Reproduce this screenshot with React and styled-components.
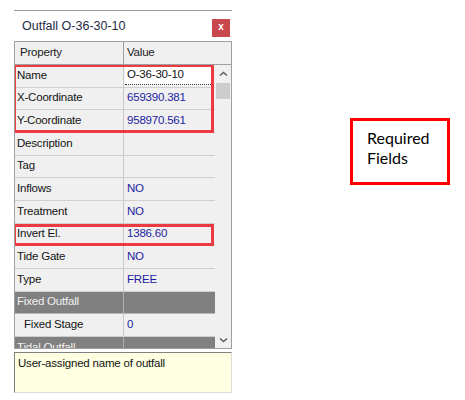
import styled, { createGlobalStyle } from 'styled-components';

const GlobalStyle = createGlobalStyle`
  body {
    margin: 0;
    background: #ffffff;
  }
`;

const Page = styled.div`
  display: flex;
  align-items: flex-start;
  padding: 10px 0 0 14px;
  font-family: "Liberation Sans", Arial, sans-serif;
`;

const Panel = styled.div`
  width: 218px;
  display: flex;
  flex-direction: column;
  border-top: 1px solid #9a9a9a;
`;

const TitleBar = styled.div`
  height: 30px;
  display: flex;
  align-items: center;
  justify-content: space-between;
  padding: 0 2px 0 8px;
`;

const Title = styled.span`
  font-size: 12.5px;
  color: #1f2a44;
  padding-bottom: 1px;
`;

const CloseButton = styled.button`
  width: 18px;
  height: 18px;
  margin-top: 4px;
  padding: 0 0 2px;
  border: none;
  background: #c8484d;
  color: #ffffff;
  font-family: "Liberation Sans", Arial, sans-serif;
  font-size: 10px;
  font-weight: bold;
  line-height: 1;
  cursor: pointer;
`;

const Grid = styled.div`
  height: 308px;
  box-sizing: border-box;
  border: 1px solid #a0a0a0;
  background: #f0f0f0;
  display: flex;
  flex-direction: column;
  overflow: hidden;
  font-size: 11.5px;
  letter-spacing: -0.2px;
`;

const Header = styled.div`
  display: flex;
  height: 23px;
  box-sizing: border-box;
  border-bottom: 1px solid #a0a0a0;
  flex-shrink: 0;
`;

const HeaderCell = styled.div`
  display: flex;
  align-items: center;
  box-sizing: border-box;
  color: #1a1a1a;
  padding-left: ${(p) => p.$pad}px;
  padding-bottom: 2px;
  ${(p) => (p.$width ? `width: ${p.$width}px; border-right: 1px solid #a0a0a0;` : 'flex: 1;')}
`;

const Body = styled.div`
  flex: 1;
  display: flex;
  min-height: 0;
`;

const Rows = styled.div`
  width: 200px;
  overflow: hidden;
`;

const Highlight = styled.div`
  position: relative;
  &::after {
    content: '';
    position: absolute;
    top: ${(p) => p.$top}px;
    bottom: 0;
    left: -2px;
    right: 1px;
    border: 3px solid #ec3a43;
    pointer-events: none;
  }
`;

const Row = styled.div`
  display: flex;
  height: 22.667px;
  box-sizing: border-box;
  border-bottom: 1px solid ${(p) => (p.$group ? '#b8b8b8' : '#cfcfcf')};
  background: ${(p) => (p.$group ? '#808080' : '#f0f0f0')};
`;

const Label = styled.div`
  width: 109px;
  box-sizing: border-box;
  display: flex;
  align-items: center;
  padding: 0 0 2px ${(p) => (p.$indent ? 9 : 2)}px;
  border-right: 1px solid ${(p) => (p.$group ? '#b0b0b0' : '#c8c8c8')};
  color: ${(p) => (p.$group ? '#f2f2f2' : '#141414')};
  white-space: nowrap;
`;

const Value = styled.div`
  flex: 1;
  display: flex;
  align-items: center;
  padding: 0 0 2px 3px;
  color: #1c1ca0;
  white-space: nowrap;
`;

const Editor = styled.div`
  align-self: stretch;
  flex: 1;
  display: flex;
  align-items: center;
  margin: 0 4px 0 -2px;
  padding: 0 0 1px 2px;
  background: #ffffff;
  border-bottom: 1px dotted #333333;
  color: #111111;
`;

const ScrollBar = styled.div`
  width: 16px;
  display: flex;
  flex-direction: column;
  background: #f0f0f0;
`;

const ArrowButton = styled.div`
  height: 17px;
  display: flex;
  align-items: center;
  justify-content: center;
  flex-shrink: 0;
`;

const Thumb = styled.div`
  height: 16px;
  margin: 1px 1px 0 1px;
  background: #cdcdcd;
`;

const Track = styled.div`
  flex: 1;
`;

const Description = styled.div`
  margin-top: 3px;
  height: 41px;
  box-sizing: border-box;
  padding: 3px 3px;
  border: 1px solid;
  border-color: #808080 #dcdcdc #dcdcdc #808080;
  background: #ffffe1;
  font-size: 11.5px;
  letter-spacing: -0.2px;
  line-height: 14px;
  color: #141414;
`;

const Callout = styled.div`
  margin: 108px 0 0 118px;
  width: 100px;
  height: 67px;
  box-sizing: border-box;
  border: 3px solid #ff0000;
  padding: 7px 0 0 14px;
  font-family: Lato, "Liberation Sans", sans-serif;
  font-size: 16px;
  line-height: 20px;
  color: #000000;
`;

const Chevron = ({ down }) => (
  <svg width="9" height="6" viewBox="0 0 9 6">
    <path
      d={down ? 'M1 1.5 L4.5 4.5 L8 1.5' : 'M1 4.5 L4.5 1.5 L8 4.5'}
      fill="none"
      stroke="#606060"
      strokeWidth="1.6"
    />
  </svg>
);

const top = [
  { label: 'Name', editor: 'O-36-30-10' },
  { label: 'X-Coordinate', value: '659390.381' },
  { label: 'Y-Coordinate', value: '958970.561' },
];

const middle = [
  { label: 'Description', value: '' },
  { label: 'Tag', value: '' },
  { label: 'Inflows', value: 'NO' },
  { label: 'Treatment', value: 'NO' },
];

const bottom = [
  { label: 'Tide Gate', value: 'NO' },
  { label: 'Type', value: 'FREE' },
  { label: 'Fixed Outfall', group: true },
  { label: 'Fixed Stage', value: '0', indent: true },
  { label: 'Tidal Outfall', group: true },
];

function PropRow({ item }) {
  return (
    <Row $group={item.group}>
      <Label $group={item.group} $indent={item.indent}>
        {item.label}
      </Label>
      <Value>{item.editor ? <Editor>{item.editor}</Editor> : item.value}</Value>
    </Row>
  );
}

export default function App() {
  return (
    <>
      <GlobalStyle />
      <Page>
        <Panel>
          <TitleBar>
            <Title>Outfall O-36-30-10</Title>
            <CloseButton>x</CloseButton>
          </TitleBar>
          <Grid>
            <Header>
              <HeaderCell $width={109} $pad={5}>Property</HeaderCell>
              <HeaderCell $pad={3}>Value</HeaderCell>
            </Header>
            <Body>
              <Rows>
                <Highlight $top={-1}>
                  {top.map((r) => (
                    <PropRow key={r.label} item={r} />
                  ))}
                </Highlight>
                {middle.map((r) => (
                  <PropRow key={r.label} item={r} />
                ))}
                <Highlight $top={0}>
                  <PropRow item={{ label: 'Invert El.', value: '1386.60' }} />
                </Highlight>
                {bottom.map((r) => (
                  <PropRow key={r.label} item={r} />
                ))}
              </Rows>
              <ScrollBar>
                <ArrowButton>
                  <Chevron />
                </ArrowButton>
                <Thumb />
                <Track />
                <ArrowButton>
                  <Chevron down />
                </ArrowButton>
              </ScrollBar>
            </Body>
          </Grid>
          <Description>User-assigned name of outfall</Description>
        </Panel>
        <Callout>
          Required
          <br />
          Fields
        </Callout>
      </Page>
    </>
  );
}
